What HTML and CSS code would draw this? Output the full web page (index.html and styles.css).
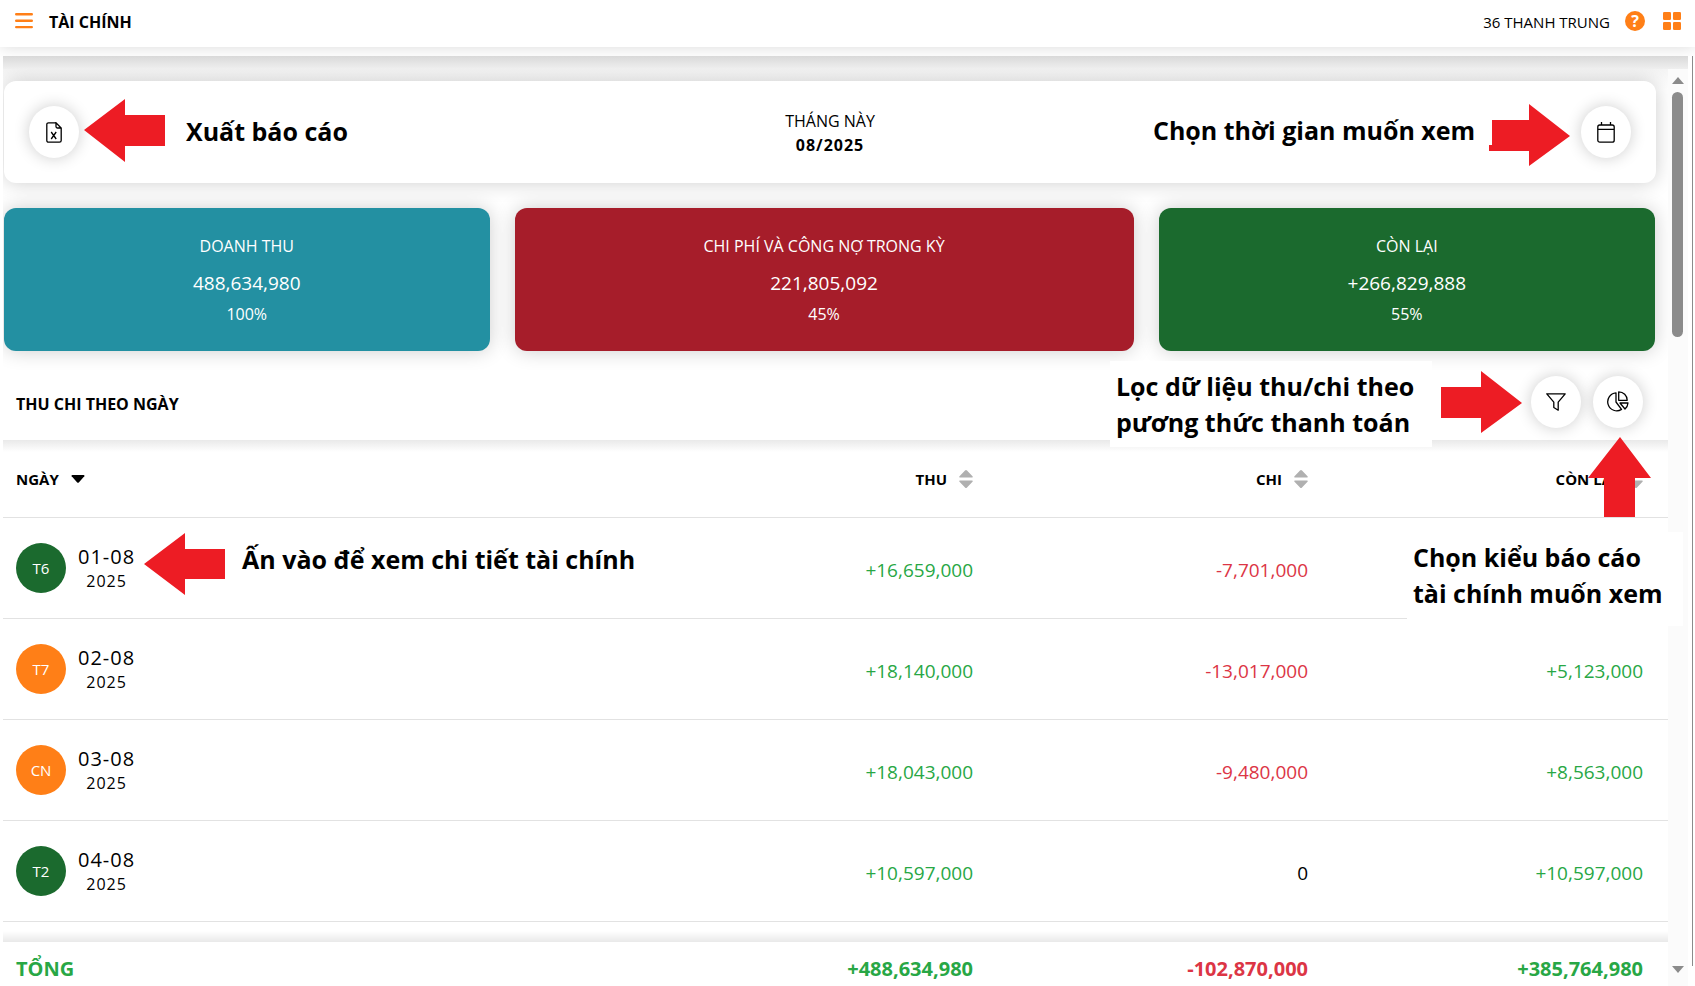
FILE: index.html
```html
<!DOCTYPE html>
<html lang="vi">
<head>
<meta charset="utf-8">
<title>Tài chính</title>
<link rel="stylesheet" href="styles.css">
</head>
<body>
<header class="topbar">
  <button class="icon-btn" aria-label="Menu"><svg width="18" height="16" viewBox="0 0 18 16"><path d="M1.200 1.300h15.600M1.200 7.700h15.600M1.200 14.100h15.600" stroke="#ff7f17" stroke-width="2.400" stroke-linecap="round"/></svg></button>
  <h1 class="topbar-title">TÀI CHÍNH</h1>
  <span class="branch">36 THANH TRUNG</span>
  <button class="icon-btn help" aria-label="Trợ giúp">?</button>
  <button class="icon-btn" aria-label="Ứng dụng"><svg width="18" height="18" viewBox="0 0 18 18" fill="#ff7f17"><rect width="8" height="8" rx="1.3"/><rect x="10" width="8" height="8" rx="1.3"/><rect y="10" width="8" height="8" rx="1.3"/><rect x="10" y="10" width="8" height="8" rx="1.3"/></svg></button>
</header>
<div class="frame">
  <div class="strip"></div>
  <div class="body-row">
    <main class="content">
      <section class="period card">
        <button class="round" aria-label="Xuất báo cáo"><svg width="16" height="21" viewBox="0 0 16 21" fill="none" stroke="#000" stroke-width="1.3"><path d="M10 .8H2.5A1.7 1.7 0 0 0 .8 2.500V18.500A1.700 1.700 0 0 0 2.500 20.200H13.500A1.700 1.700 0 0 0 15.200 18.500V6L10 .8V4.500A1.500 1.500 0 0 0 11.500 6H15.200"/><path d="M5.200 10L10.200 17M10.200 10L5.200 17"/></svg></button>
        <div class="period-text"><span>THÁNG NÀY</span><strong class="spaced">08/2025</strong></div>
        <button class="round" aria-label="Chọn thời gian"><svg width="18" height="21" viewBox="0 0 18 21" fill="none" stroke="#000" stroke-width="1.3"><rect x=".8" y="3" width="16.400" height="17.200" rx="2"/><path d="M1 7.300H17M4.500 0V3M13.500 0V3"/></svg></button>
      </section>
      <section class="summary">
        <div class="card tile teal"><span>DOANH THU</span><b class="amount">488,634,980</b><span>100%</span></div>
        <div class="card tile red"><span>CHI PHÍ VÀ CÔNG NỢ TRONG KỲ</span><b class="amount">221,805,092</b><span>45%</span></div>
        <div class="card tile green"><span>CÒN LẠI</span><b class="amount">+266,829,888</b><span>55%</span></div>
      </section>
      <section class="section-head">
        <h2 class="section-title">THU CHI THEO NGÀY</h2>
        <button class="round" aria-label="Lọc"><svg width="20" height="18" viewBox="0 0 20 18" fill="none" stroke="#000" stroke-width="1.300" stroke-linejoin="round"><path d="M.8.8H19.200L12.200 9.200V17.200L7.800 14.500V9.200Z"/></svg></button>
        <button class="round" aria-label="Kiểu báo cáo"><svg width="22" height="21" viewBox="0 0 22 21" fill="none" stroke="#000" stroke-width="1.300" stroke-linejoin="round"><path d="M9 1.800A9 9 0 1 0 14.500 18.400L9 11Z"/><path d="M11.700.8V9.300H20.200A8.500 8.500 0 0 0 11.700.8Z"/><path d="M13 12H21A9 9 0 0 1 18 18Z"/></svg></button>
      </section>
      <table class="ledger">
        <thead>
          <tr>
            <th scope="col">NGÀY<svg class="sort" width="14" height="18" viewBox="0 0 14 18"><path d="M1.500 5h11q1.500 0 .8 1.300L8 12.300q-1 1-2 0L.7 6.300Q0 5 1.500 5Z"/></svg></th>
            <th scope="col">THU<svg class="sort" width="14" height="18" viewBox="0 0 14 18" fill="#b0b0b0"><path id="sort" d="M.8 7.500Q-.3 7.500.5 6.300L6 .5q1-1 2 0l5.500 5.800q.8 1.200-.3 1.200ZM.8 10.500h12.400q1.100 0 .3 1.200L8 17.500q-1 1-2 0L.5 11.700Q-.3 10.500.8 10.500Z"/></svg></th>
            <th scope="col">CHI<svg class="sort" width="14" height="18" viewBox="0 0 14 18" fill="#b0b0b0"><use href="#sort"/></svg></th>
            <th scope="col">CÒN LẠI<svg class="sort" width="14" height="18" viewBox="0 0 14 18" fill="#b0b0b0"><use href="#sort"/></svg></th>
          </tr>
        </thead>
        <tbody>
          <tr><td><div class="day"><span class="badge">T6</span><span class="date spaced"><span class="dm">01-08</span><span>2025</span></span></div></td><td class="pos">+16,659,000</td><td class="neg">-7,701,000</td><td></td></tr>
          <tr><td><div class="day"><span class="badge weekend">T7</span><span class="date spaced"><span class="dm">02-08</span><span>2025</span></span></div></td><td class="pos">+18,140,000</td><td class="neg">-13,017,000</td><td class="pos">+5,123,000</td></tr>
          <tr><td><div class="day"><span class="badge weekend">CN</span><span class="date spaced"><span class="dm">03-08</span><span>2025</span></span></div></td><td class="pos">+18,043,000</td><td class="neg">-9,480,000</td><td class="pos">+8,563,000</td></tr>
          <tr><td><div class="day"><span class="badge">T2</span><span class="date spaced"><span class="dm">04-08</span><span>2025</span></span></div></td><td class="pos">+10,597,000</td><td>0</td><td class="pos">+10,597,000</td></tr>
          <tr class="fade"><td colspan="4"></td></tr>
        </tbody>
        <tfoot>
          <tr><th scope="row" class="pos">TỔNG</th><td class="pos">+488,634,980</td><td class="neg">-102,870,000</td><td class="pos">+385,764,980</td></tr>
        </tfoot>
      </table>
    </main>
    <div class="scrollbar">
      <svg width="12" height="7" viewBox="0 0 12 7" fill="#8b8b8b"><path d="M0 7L6 0L12 7Z"/></svg>
      <div class="thumb"></div>
      <svg width="12" height="7" viewBox="0 0 12 7" fill="#8b8b8b"><path d="M0 0L6 7L12 0Z"/></svg>
    </div>
  </div>
</div>

<svg class="arrow arrow-export" width="81" height="63" viewBox="0 0 81 63"><path d="M0 31L41 0V16H81V47H41V63Z"/></svg>
<p class="note note-export">Xuất báo cáo</p>
<p class="note note-time">Chọn thời gian muốn xem</p>
<svg class="arrow arrow-time" width="81" height="62" viewBox="0 0 81 62"><path d="M3 16H40V0L81 32L40 62V47H0V41H3Z"/></svg>
<p class="note note-filter">Lọc dữ liệu thu/chi theo<br>pương thức thanh toán</p>
<svg class="arrow arrow-filter" width="81" height="62" viewBox="0 0 81 62"><path d="M0 16H40V0L81 32L40 62V47H0Z"/></svg>
<svg class="arrow arrow-chart" width="63" height="80" viewBox="0 0 63 80"><path d="M32 0L63 41H47V80H16V41H0Z"/></svg>
<p class="note note-chart">Chọn kiểu báo cáo<br>tài chính muốn xem</p>
<svg class="arrow arrow-day" width="81" height="62" viewBox="0 0 81 62"><path d="M0 31L41 0V16H81V46H41V62Z"/></svg>
<p class="note note-day">Ấn vào để xem chi tiết tài chính</p>
</body>
</html>
```
FILE: styles.css
```css
* { box-sizing: border-box; }
body {
  margin: 0;
  height: 100vh;
  overflow: hidden;
  display: flex;
  flex-direction: column;
  position: relative;
  background: #fff;
  color: #000;
  font: 16px/24px "Open Sans", "Noto Sans", sans-serif;
}
button { border: 0; padding: 0; font: inherit; cursor: pointer; background: none; }
svg { display: block; flex: none; }

.topbar {
  height: 47px;
  flex: none;
  display: flex;
  align-items: center;
  padding: 0 14px 4px 15px;
  position: relative;
  box-shadow: 0 0 16px rgba(0, 0, 0, .15);
}
.icon-btn { margin-bottom: 2px; }
.topbar-title { margin: 0 auto 0 16px; font-size: 16px; line-height: 24px; font-weight: 700; }
.branch { margin-right: 15px; font-size: 15px; }
.help {
  width: 20px;
  height: 20px;
  margin-right: 18px;
  border-radius: 50%;
  background: #ff7f17;
  color: #fff;
  font-weight: 700;
  line-height: 20px;
}

.frame {
  flex: 1;
  min-height: 0;
  display: flex;
  flex-direction: column;
  margin: 9px 2px 0 3px;
  padding-right: 1px;
  position: relative;
  background: #fff;
  overflow: hidden;
}
.frame::after {
  content: "";
  position: absolute;
  top: 0;
  right: 0;
  bottom: 20px;
  width: 1px;
  background: #8b8b8b;
}
.strip { height: 13px; flex: none; margin-right: 4px; background: linear-gradient(#d9d9d9, #efefef); }
.body-row { flex: 1; min-height: 0; display: flex; }
.content { flex: 1; min-width: 0; overflow: hidden; background: linear-gradient(#f4f4f4, #fff 20px); }

.card { border-radius: 12px; box-shadow: 0 0 20px rgba(0, 0, 0, .2); }
.period {
  display: flex;
  align-items: center;
  justify-content: space-between;
  height: 102px;
  margin: 12px 12px 25px 1px;
  padding: 0 25px;
  background: #fff;
}
.period-text { display: flex; flex-direction: column; align-items: center; padding-top: 2px; }
.round {
  width: 50px;
  height: 52px;
  flex: none;
  display: flex;
  align-items: center;
  justify-content: center;
  border-radius: 50%;
  background: #fff;
  box-shadow: 0 0 16px rgba(0, 0, 0, .2);
}
.spaced { letter-spacing: 1px; }

.summary { display: flex; gap: 25px; margin: 0 13px 0 1px; }
.tile {
  flex: 1 1 auto;
  height: 143px;
  padding-top: 1px;
  display: flex;
  flex-direction: column;
  align-items: center;
  justify-content: center;
  color: #fff;
}
.amount { margin: 11px 0 5px; font-size: 19px; line-height: 28px; font-weight: 400; }
.teal { background: #2390a2; }
.red { background: #a61d2a; }
.green { background: #1b6a2e; }

.section-head {
  display: flex;
  align-items: center;
  gap: 12px;
  height: 89px;
  padding: 16px 25px 0 13px;
}
.section-head .round { margin-bottom: 4px; }
.section-title { margin: 0 auto 0 0; font-size: 16px; line-height: 24px; font-weight: 700; }

.ledger { width: 100%; table-layout: fixed; border-collapse: separate; border-spacing: 0; }
.ledger th, .ledger td { border-bottom: 1px solid #e2e2e2; padding: 0 25px 0 0; text-align: right; }
.ledger th:not(:first-child) { width: 335px; }
.ledger th:first-child, .ledger td:first-child { text-align: left; padding-left: 13px; }
.ledger thead { background: linear-gradient(#e9e9e9, #fff 12px); }
.ledger thead th { height: 78px; font-size: 15px; }
.ledger tbody td { height: 101px; font-size: 19px; padding-top: 4px; }
.sort { display: inline-block; margin: 0 0 2px 12px; vertical-align: middle; }
.ledger tbody td:first-child { padding-top: 0; }
.day { display: flex; align-items: center; gap: 12px; font-size: 16px; }
.badge {
  width: 50px;
  height: 50px;
  display: flex;
  align-items: center;
  justify-content: center;
  border-radius: 50%;
  background: #1b6a2e;
  color: #fff;
  font-size: 15px;
}
.weekend { background: #ff7f17; }
.date { display: flex; flex-direction: column; align-items: center; padding-top: 2px; }
.dm { font-size: 20px; }
.pos { color: #28a745; }
.neg { color: #dc3545; }
.ledger .fade td { height: 20px; padding: 0; border: 0; background: linear-gradient(#fff 9px, #e9e9e9); }
.ledger tfoot th, .ledger tfoot td { height: 54px; font-size: 20px; font-weight: 700; }

.scrollbar {
  width: 20px;
  flex: none;
  margin-right: 4px;
  padding: 8px 1px 13px 0;
  display: flex;
  flex-direction: column;
  align-items: center;
  background: #fbfbfb;
}
.thumb { width: 11px; height: 245px; margin: 8px 0 auto; border-radius: 6px; background: #8b8b8b; }

/* Guide annotations float over the screen */
.note { position: absolute; margin: 0; font-size: 25px; line-height: 36px; font-weight: 700; white-space: nowrap; }
.arrow { position: absolute; fill: #ed1c24; }
.arrow-export { left: 84px; top: 99px; }
.note-export { left: 186px; top: 113px; }
.note-time { left: 1153px; top: 112px; }
.arrow-time { left: 1489px; top: 104px; }
.note-filter { left: 1110px; top: 361px; padding: 7px 18px 7px 6px; background: #fff; }
.arrow-filter { left: 1441px; top: 371px; }
.arrow-chart { left: 1588px; top: 437px; }
.note-chart { left: 1407px; top: 532px; padding: 7px 20px 15px 6px; background: #fff; }
.arrow-day { left: 144px; top: 533px; }
.note-day { left: 242px; top: 541px; }
```
